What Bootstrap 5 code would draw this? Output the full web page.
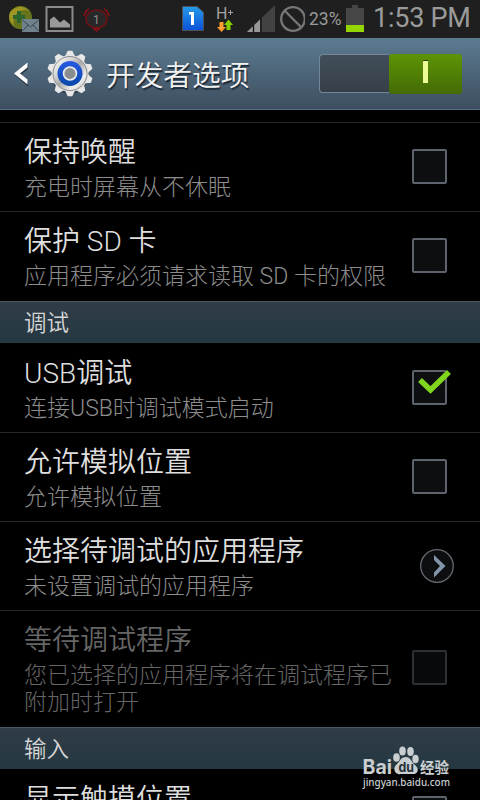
<!DOCTYPE html>
<html lang="zh-CN">
<head>
<meta charset="utf-8">
<meta name="viewport" content="width=device-width, initial-scale=1">
<title>开发者选项</title>
<link href="https://cdn.jsdelivr.net/npm/bootstrap@5.3.0/dist/css/bootstrap.min.css" rel="stylesheet">
<style>
body{background:#000;font-family:Roboto,"Noto Sans CJK SC",sans-serif;color:#dcdcdc;}
.screen{width:480px;height:800px;background:#000;}
.statusbar{height:38px;background:#1f1f1f;color:#9a9a9a;}
.statusbar svg{display:block;flex:none;}
.status-icons{width:305px;}
.battery{margin-left:4px;}
.percent{font-size:17.5px;line-height:39px;width:33px;margin-left:4px;white-space:nowrap;}
.clock{font-size:27px;line-height:37px;margin-left:9px;letter-spacing:-.25px;white-space:nowrap;}
.titlebar{height:72px;background:linear-gradient(#5b7a90,#3e4e60);border-top:1px solid #5f7d92;border-bottom:1px solid #566f82;}
.titlebar h1{font-size:28.7px;line-height:70px;font-weight:350;color:#f2f2f2;text-shadow:1px 2px 1px #1c2936;margin-left:11px;padding-top:3px;}
.switch{width:143px;height:40px;margin-right:18px;}
.switch-off{height:39px;background:linear-gradient(#414e59,#363f48);border:1px solid #73869a;border-right:0;border-radius:4px 0 0 4px;}
.switch-on{width:73px;height:40px;background:linear-gradient(#5d9406,#446b05);border-radius:3px;padding-top:6px;}
.switch-on span{width:5px;height:23px;background:#ecfc97;border-top:1px solid #263b05;}
.gap-top{height:12px;}
.setting{height:89px;border-top:1px solid #262626;padding:12px 33px 0 24px;}
.setting-tall{height:90px;}
.first-in-group{border-top:0;padding-top:13px;}
.setting h2{font-size:28px;line-height:36px;font-weight:350;margin:0;color:#dedede;white-space:nowrap;}
.setting p{font-size:23px;line-height:27px;font-weight:300;margin:3px 0 0;color:#8c8c8c;white-space:nowrap;}
.waiting{height:117px;}
.waiting h2{color:#666;}
.waiting p{color:#666;}
.section{height:42px;padding-left:24px;background:linear-gradient(#303c49,#243840);border-top:1px solid #4b5865;font-size:22.5px;line-height:43px;font-weight:350;color:#d6d6d6;}
.tick{width:35px;height:35px;border:2px solid #5d646e;border-radius:2px;background:#0d0e10;margin-top:14px;flex:none;}
.tick svg{left:2px;top:-4px;}
.waiting .tick{border-color:#2c3136;background:#08090a;margin-top:27px;}
.go{margin:15px -7px 0 0;flex:none;}
.watermark{left:361px;top:743px;}
</style>
<script src="https://cdn.jsdelivr.net/npm/bootstrap@5.3.0/dist/js/bootstrap.bundle.min.js"></script>
</head>
<body>
<main class="screen position-relative overflow-hidden d-flex flex-column">
<div class="statusbar d-flex flex-shrink-0">
<svg class="status-icons" width="305" height="38" viewBox="0 0 305 38" aria-hidden="true">
<defs><linearGradient id="sim" x2="0" y2="1"><stop stop-color="#259be9"/><stop offset="1" stop-color="#0b51d8"/></linearGradient></defs>
<circle cx="20.500" cy="17.500" r="11.500" fill="#66751c"/>
<path d="M10 12Q20 2 29 11Q22 8 17 13Q12 20 14 26Q7 20 10 12Z" fill="#9d9422"/>
<path d="M17 11h4v4h4v4h-4v4h-4v-4h-4v-4h4z" fill="#2b652b"/>
<rect x="22" y="19" width="17" height="13" fill="#72828c"/><path d="M22.500 20l8 7 8-7M22.500 31l5.500-6M38.500 31l-5.500-6" fill="none" stroke="#354650"/>
<rect x="46.500" y="7" width="26" height="24" fill="none" stroke="#8b8b8b" stroke-width="2"/>
<path d="M50 27.500v-8l4-3 6 6 4-3 6 5v3z" fill="#999"/>
<ellipse cx="96.500" cy="19" rx="10.500" ry="9" fill="#282828" stroke="#6d1114" stroke-width="1.600"/>
<path d="M84 16q1-5 5-7M109 16q-1-5-5-7M94 28.500h5l-2.500 2.500z" fill="none" stroke="#8b1115" stroke-width="1.500"/>
<text x="93" y="23.500" font-size="12" fill="#909090">1</text>
<path d="M182.500 6.500H197l6.500 6V30.500h-21z" fill="url(#sim)" stroke="#4b525d"/>
<path d="M189 12h5v13h-3V14.500h-2z" fill="#fff"/>
<text x="216" y="19" font-size="16" fill="#a2a2a2">H</text><path d="M228 12.500h5M230.500 10v5" stroke="#a2a2a2"/>
<path d="M219.500 22h4v5h2.500l-4.500 5-4.500-5h2.500z" fill="#ff9d2f"/><path d="M226.500 30v-5H224l4.500-5.500 4.500 5.500h-2.500v5z" fill="#86ce00"/>
<path d="M247 32L275 5V32z" fill="#424242"/><path d="M247 32L260 19.500V32z" fill="#979797"/><path d="M253.500 25v7M261 18v14" stroke="#111" stroke-width="1.300"/>
<circle cx="293" cy="19" r="11.800" fill="none" stroke="#777" stroke-width="2.300"/><path d="M285 11l16 16" stroke="#777" stroke-width="2.300"/>
</svg>
<span class="percent">23%</span>
<svg class="battery" width="18" height="38" aria-hidden="true"><path d="M0 8H6V5h6v3h6v17H0z" fill="#464646"/><path d="M0 25h18v7H0z" fill="#95d500"/></svg>
<span class="clock">1:53 PM</span>
</div>

<header class="titlebar d-flex align-items-center flex-shrink-0">
<svg width="95" height="70" viewBox="0 0 95 70" aria-label="返回">
<defs><linearGradient id="steel" x2="1" y2="1"><stop stop-color="#fff"/><stop offset=".3" stop-color="#d8d8d8"/><stop offset=".5" stop-color="#aaa"/><stop offset=".75" stop-color="#f1f1f1"/><stop offset="1" stop-color="#aaa"/></linearGradient>
<linearGradient id="blue" x2="0" y2="1"><stop stop-color="#2859e4"/><stop offset="1" stop-color="#0848a8"/></linearGradient></defs>
<path d="M28 24L15 34.500L28 46V41L20.500 34.500L28 28.500z" fill="#25313d" transform="translate(0 1.500)"/>
<path d="M27.500 23.500L14 34.500L27.500 45.500V40.500L20 34.500L27.500 28.500z" fill="#fff"/>
<g transform="translate(70 34.500)">
<circle r="18.500" cy="2" fill="#2f3d4b"/>
<g fill="#e8e8e8"><path id="tooth" d="M-4.500-18L-2.300-22.800H2.300L4.500-18V0H-4.500z"/><use href="#tooth" transform="rotate(36)"/><use href="#tooth" transform="rotate(72)"/><use href="#tooth" transform="rotate(108)"/><use href="#tooth" transform="rotate(144)"/><use href="#tooth" transform="rotate(180)"/><use href="#tooth" transform="rotate(216)"/><use href="#tooth" transform="rotate(252)"/><use href="#tooth" transform="rotate(288)"/><use href="#tooth" transform="rotate(324)"/></g>
<circle r="18.500" fill="#e4e4e4"/><circle r="17" fill="url(#steel)" stroke="#8d8d8d"/>
<circle r="12.500" fill="url(#blue)"/><circle r="6.500" fill="#a6a8aa" stroke="#eee" stroke-width="1.500"/><circle r="5" fill="#8a8d90"/>
</g></svg>
<h1 class="mb-0 flex-grow-1">开发者选项</h1>
<div class="switch d-flex"><div class="switch-off flex-grow-1"></div><div class="switch-on d-flex justify-content-center"><span></span></div></div>
</header>
<div class="gap-top flex-shrink-0"></div>

<section class="setting d-flex align-items-start justify-content-between flex-shrink-0"><div><h2>保持唤醒</h2><p>充电时屏幕从不休眠</p></div><span class="tick"></span></section>
<section class="setting setting-tall d-flex align-items-start justify-content-between flex-shrink-0"><div><h2>保护 SD 卡</h2><p>应用程序必须请求读取 SD 卡的权限</p></div><span class="tick"></span></section>
<div class="section flex-shrink-0">调试</div>
<section class="setting first-in-group d-flex align-items-start justify-content-between flex-shrink-0"><div><h2>USB调试</h2><p>连接USB时调试模式启动</p></div><span class="tick position-relative"><svg class="position-absolute" width="36" height="28" viewBox="0 0 36 28"><path d="M4 12l10.500 10L33 4" fill="none" stroke="#80d61c" stroke-width="5.500"/></svg></span></section>
<section class="setting d-flex align-items-start justify-content-between flex-shrink-0"><div><h2>允许模拟位置</h2><p>允许模拟位置</p></div><span class="tick"></span></section>
<section class="setting d-flex align-items-start justify-content-between flex-shrink-0"><div><h2>选择待调试的应用程序</h2><p>未设置调试的应用程序</p></div><svg class="go" width="34" height="34" viewBox="0 0 34 34"><circle cx="17" cy="17" r="16.300" fill="#0d0e10" stroke="#656970" stroke-width="1.300"/><path d="M14 6L25.500 17L14 28.500V23.500L20 17L14 11z" fill="#8296aa"/></svg></section>
<section class="setting waiting d-flex align-items-start justify-content-between flex-shrink-0"><div><h2>等待调试程序</h2><p>您已选择的应用程序将在调试程序已<br>附加时打开</p></div><span class="tick"></span></section>
<div class="section flex-shrink-0">输入</div>
<section class="setting first-in-group d-flex align-items-start justify-content-between flex-shrink-0"><div><h2>显示触摸位置</h2></div><span class="tick"></span></section>

<svg class="watermark position-absolute" width="94" height="46" viewBox="0 0 94 46" aria-label="百度经验">
<g fill="#c9ced1"><text x="1.500" y="30.500" font-family="Inter" font-weight="700" font-size="20" textLength="29.500" lengthAdjust="spacingAndGlyphs">Bai</text>
<ellipse cx="35.500" cy="14.500" rx="3.300" ry="4.300"/><ellipse cx="41.500" cy="8" rx="3.300" ry="4.500"/><ellipse cx="49.500" cy="8.500" rx="3.300" ry="4.500"/><ellipse cx="54.500" cy="16" rx="3.200" ry="4.300"/>
<path d="M45 14C39 14 39 19 35 22C31 27 35 32 40 31H50C57 32 59 26 54 22C50 19 50 14 45 14Z"/>
<text x="59" y="29.500" font-family="Noto Sans CJK SC" font-weight="700" font-size="15" textLength="29" lengthAdjust="spacingAndGlyphs">经验</text>
<text x="2" y="43" font-family="Noto Sans" font-weight="500" font-size="10.500" textLength="87" lengthAdjust="spacingAndGlyphs">jingyan.baidu.com</text></g>
<text x="37.500" y="29" font-family="Inter" font-weight="700" font-size="13.500" fill="#283037" textLength="15.500" lengthAdjust="spacingAndGlyphs">du</text>
</svg>
</main>
</body>
</html>
